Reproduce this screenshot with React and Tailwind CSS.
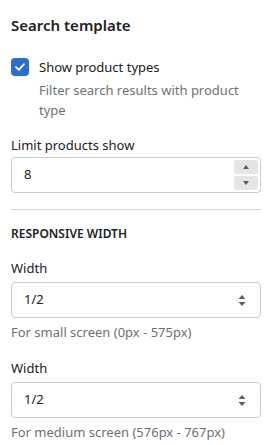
function Caret() {
  return (
    <svg width="8" height="13" viewBox="0 0 8 13" className="fill-[#5c5f62]">
      <path d="M0.5 5 L4 1 L7.5 5 Z" />
      <path d="M0.5 8 L4 12 L7.5 8 Z" />
    </svg>
  )
}

function SelectField({ label, value, help }) {
  return (
    <div className="flex flex-col">
      <label className="text-[13px] leading-5 text-[#202223]">{label}</label>
      <div className="mt-1 flex h-9 items-center justify-between rounded-[4px] border border-[#c9cccf] bg-white pl-3 pr-[14px]">
        <span className="text-[13px] text-[#202223]">{value}</span>
        <Caret />
      </div>
      <p className="mt-1 text-[13px] leading-5 text-[#6d7175]">{help}</p>
    </div>
  )
}

export default function App() {
  return (
    <div
      className="min-h-[445px] w-[269px] bg-white pl-[11px] pr-2 pt-[13px]"
      style={{ fontFamily: '"Noto Sans", "Open Sans", sans-serif' }}
    >
      <h2 className="text-[15px] font-semibold leading-6 text-[#202223]">
        Search template
      </h2>

      <div className="mt-5 flex items-start gap-[10px]">
        <span className="mt-[1px] flex h-[18px] w-[18px] shrink-0 items-center justify-center rounded-[4px] bg-[#2c6ecb]">
          <svg width="10" height="8" viewBox="0 0 10 8" fill="none">
            <path
              d="M1 4.2 L3.8 6.8 L9 1.2"
              stroke="white"
              strokeWidth="1.8"
              strokeLinecap="round"
              strokeLinejoin="round"
            />
          </svg>
        </span>
        <div className="flex flex-col">
          <span className="text-[13px] leading-5 text-[#202223]">
            Show product types
          </span>
          <p className="mt-[3px] text-[13px] leading-5 text-[#6d7175]">
            Filter search results with product type
          </p>
        </div>
      </div>

      <div className="mt-[15px] flex flex-col">
        <label className="text-[13px] leading-5 text-[#202223]">
          Limit products show
        </label>
        <div className="mt-[2px] flex h-9 items-center justify-between rounded-[4px] border border-[#c9cccf] bg-white pl-3 pr-[2px]">
          <span className="text-[13px] text-[#202223]">8</span>
          <div className="flex flex-col gap-[2px]">
            <span className="flex h-[14px] w-6 items-center justify-center rounded-[3px] bg-[#e4e5e7]">
              <svg width="6" height="4" viewBox="0 0 6 4" className="fill-[#5c5f62]">
                <path d="M0 4 L3 0 L6 4 Z" />
              </svg>
            </span>
            <span className="flex h-[14px] w-6 items-center justify-center rounded-[3px] bg-[#e4e5e7]">
              <svg width="6" height="4" viewBox="0 0 6 4" className="fill-[#5c5f62]">
                <path d="M0 0 L3 4 L6 0 Z" />
              </svg>
            </span>
          </div>
        </div>
      </div>

      <div className="mt-4 h-px bg-[#d2d5d8]" />

      <h3 className="mt-[14px] text-[12px] font-semibold uppercase leading-5 text-[#202223]">
        Responsive width
      </h3>

      <div className="mt-[14px] flex flex-col gap-4">
        <SelectField label="Width" value="1/2" help="For small screen (0px - 575px)" />
        <SelectField label="Width" value="1/2" help="For medium screen (576px - 767px)" />
      </div>
    </div>
  )
}
